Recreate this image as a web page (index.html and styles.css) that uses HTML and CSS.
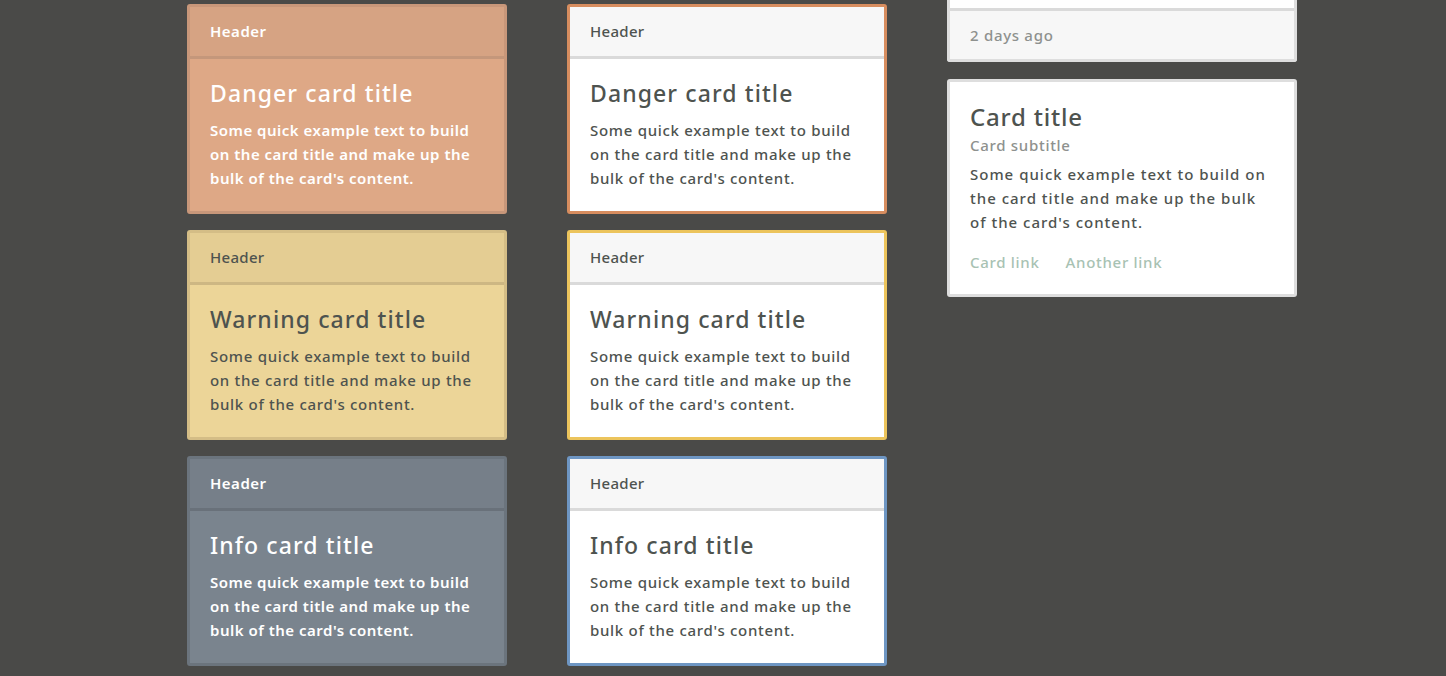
FILE: index.html
```html
<!DOCTYPE html>
<html>
<head>
<meta charset="utf-8">
<link rel="stylesheet" href="styles.css">
</head>
<body>
<div class="page">
  <div class="col col-a">
    <div class="card solid danger">
      <div class="card-header">Header</div>
      <div class="card-body">
        <h4 class="card-title">Danger card title</h4>
        <p class="card-text">Some quick example text to build on the card title and make up the bulk of the card's content.</p>
      </div>
    </div>
    <div class="card solid warning">
      <div class="card-header">Header</div>
      <div class="card-body">
        <h4 class="card-title">Warning card title</h4>
        <p class="card-text">Some quick example text to build on the card title and make up the bulk of the card's content.</p>
      </div>
    </div>
    <div class="card solid info">
      <div class="card-header">Header</div>
      <div class="card-body">
        <h4 class="card-title">Info card title</h4>
        <p class="card-text">Some quick example text to build on the card title and make up the bulk of the card's content.</p>
      </div>
    </div>
  </div>
  <div class="col col-a">
    <div class="card outline danger">
      <div class="card-header">Header</div>
      <div class="card-body">
        <h4 class="card-title">Danger card title</h4>
        <p class="card-text">Some quick example text to build on the card title and make up the bulk of the card's content.</p>
      </div>
    </div>
    <div class="card outline warning">
      <div class="card-header">Header</div>
      <div class="card-body">
        <h4 class="card-title">Warning card title</h4>
        <p class="card-text">Some quick example text to build on the card title and make up the bulk of the card's content.</p>
      </div>
    </div>
    <div class="card outline info">
      <div class="card-header">Header</div>
      <div class="card-body">
        <h4 class="card-title">Info card title</h4>
        <p class="card-text">Some quick example text to build on the card title and make up the bulk of the card's content.</p>
      </div>
    </div>
  </div>
  <div class="col col-b">
    <div class="card plain cut">
      <div class="stub"></div>
      <div class="card-footer">2 days ago</div>
    </div>
    <div class="card plain">
      <div class="card-body">
        <h4 class="card-title">Card title</h4>
        <h6 class="card-subtitle">Card subtitle</h6>
        <p class="card-text">Some quick example text to build on the card title and make up the bulk of the card's content.</p>
        <div class="links">
          <a href="#" class="card-link">Card link</a>
          <a href="#" class="card-link">Another link</a>
        </div>
      </div>
    </div>
  </div>
</div>
</body>
</html>
```

FILE: styles.css
```css
* { box-sizing: border-box; }
html, body { margin: 0; padding: 0; }
body {
  background: #4a4a48;
  font-family: "Noto Sans", "DejaVu Sans", sans-serif;
  color: #4e534f;
  font-size: 15px;
  line-height: 24px;
  letter-spacing: 0.7px;
}
.page {
  display: flex;
  gap: 60px;
  padding-left: 187px;
  align-items: flex-start;
}
.col { display: flex; flex-direction: column; }
.col-a { width: 320px; padding-top: 4px; gap: 16px; }
.col-b { width: 350px; gap: 17px; }

.card {
  border: 3px solid #dedede;
  border-radius: 3px;
  background: #fff;
  overflow: hidden;
}
.card-header {
  padding: 12px 20px;
  height: 52px;
  background: #f7f7f7;
  border-bottom: 3px solid #dadada;
  font-weight: 500;
  letter-spacing: 0.3px;
}
.card-body { padding: 20px 20px 21px; }
.card-title {
  margin: 0 0 11px;
  font-size: 23px;
  line-height: 28px;
  font-weight: 500;
  letter-spacing: 1.1px;
  color: #4e534f;
}
.card-text { margin: 0; font-weight: 500; }

.solid.danger { background: #dea886; border-color: #c8977a; }
.solid.danger .card-header { background: #d6a383; border-bottom-color: #c4977b; }
.solid.warning { background: #ecd598; border-color: #d4bd86; }
.solid.warning .card-header { background: #e4cd93; border-bottom-color: #cdb783; }
.solid.info { background: #7a848e; border-color: #6b747d; }
.solid.info .card-header { background: #767f89; border-bottom-color: #69717a; }
.solid.danger, .solid.info { color: #fff; }
.solid.danger .card-title, .solid.info .card-title { color: #fff; }
.solid.danger .card-text, .solid.info .card-text,
.solid.danger .card-header, .solid.info .card-header { font-weight: 600; letter-spacing: 0.5px; }

.outline.danger { border-color: #d78d5f; }
.outline.warning { border-color: #ecc45c; }
.outline.info { border-color: #6e96c3; }

.plain { border-color: #dedede; }
.cut { border-top: none; border-radius: 0 0 3px 3px; }
.stub { height: 8px; background: #fff; }
.card-footer {
  background: #f7f7f7;
  border-top: 3px solid #dadada;
  padding: 12px 20px;
  height: 51px;
  color: #8e918e;
  font-weight: 500;
}
.plain .card-body { padding: 20px 20px 20px; }
.plain .card-title { font-size: 24px; line-height: 29px; margin-bottom: 0; letter-spacing: 0.8px; }
.plain .card-text { letter-spacing: 1px; }
.card-subtitle {
  margin: 2px 0 5px;
  font-size: 15px;
  line-height: 24px;
  font-weight: 500;
  color: #8e918e;
}
.links { display: flex; gap: 26px; margin-top: 16px; }
.card-link {
  color: #a8c2b3;
  text-decoration: none;
  font-weight: 500;
}
```
